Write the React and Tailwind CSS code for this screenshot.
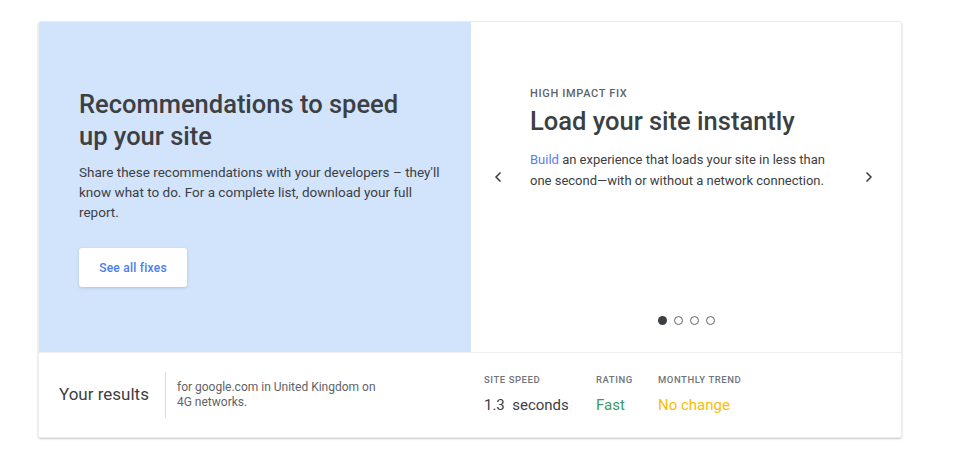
import { ChevronLeft, ChevronRight } from 'lucide-react';

const Stat = ({ label, value, color }) => (
  <div className="flex flex-col whitespace-nowrap">
    <span className="text-[9.5px] font-medium tracking-[0.06em] uppercase text-[#70757a]">{label}</span>
    <span className={`mt-[7px] text-[15px] ${color}`}>{value}</span>
  </div>
);

const App = () => {
  return (
    <div className="min-h-[457px] bg-white pt-[21px] pl-[38px]" style={{ fontFamily: 'Roboto, "Noto Sans", sans-serif' }}>
      <div className="w-[864px] rounded-[3px] border border-[#ececec] shadow-[0_1px_2px_rgba(60,64,67,0.3)] overflow-hidden">
        <div className="flex h-[330px]">
          <div className="w-[432px] bg-[#d2e3fc] pl-[40px] pr-[10px] pt-[66px]">
            <h2 className="w-[330px] text-[25.5px] font-medium leading-[32px] text-[#3c4043]">
              Recommendations to speed up your site
            </h2>
            <p className="mt-[10px] w-[372px] text-[13.5px] leading-[20px] text-[#3c4043]">
              Share these recommendations with your developers – they'll know what to do. For a complete list, download your full report.
            </p>
            <button className="mt-[26px] h-[39px] w-[108px] rounded-[3px] bg-white text-[12px] font-medium tracking-[0.02em] text-[#4a7cf2] shadow-[0_1px_3px_rgba(60,64,67,0.2)]">
              See all fixes
            </button>
          </div>
          <div className="flex flex-1">
            <div className="flex w-[54px] items-center justify-center pb-[20px]">
              <ChevronLeft size={16} strokeWidth={2.5} className="text-[#3c4043]" />
            </div>
            <div className="flex flex-1 flex-col pl-[5px] pt-[64px]">
              <div className="text-[11px] font-medium tracking-[0.06em] text-[#5f6368]">HIGH IMPACT FIX</div>
              <h3 className="mt-[2px] text-[25.5px] font-medium leading-[32px] text-[#3c4043]">Load your site instantly</h3>
              <p className="mt-[12px] w-[296px] text-[13px] leading-[21px] text-[#3c4043]">
                <span className="text-[#5a7cf0]">Build</span> an experience that loads your site in less than one second—with or without a network connection.
              </p>
              <div className="mt-auto flex justify-center gap-[7px] pb-[27px] pl-[6px]">
                <span className="h-[9px] w-[9px] rounded-full bg-[#3c4043]" />
                <span className="h-[9px] w-[9px] rounded-full border border-[#5f6368]" />
                <span className="h-[9px] w-[9px] rounded-full border border-[#5f6368]" />
                <span className="h-[9px] w-[9px] rounded-full border border-[#5f6368]" />
              </div>
            </div>
            <div className="flex w-[64px] items-center justify-center pb-[20px]">
              <ChevronRight size={16} strokeWidth={2.5} className="text-[#3c4043]" />
            </div>
          </div>
        </div>
        <div className="flex h-[85px] items-center border-t border-[#eeeeee] bg-white">
          <div className="pl-[20px] pr-[16px] text-[17px] text-[#3c4043]">Your results</div>
          <div className="h-[46px] w-px bg-[#dadce0]" />
          <div className="w-[220px] pl-[11px] text-[12px] leading-[15px] text-[#5f6368]">
            for google.com in United Kingdom on 4G networks.
          </div>
          <div className="ml-[98px] flex">
            <div className="w-[112px]"><Stat label="Site speed" value={<span>1.3&nbsp; seconds</span>} color="text-[#3c4043]" /></div>
            <div className="w-[62px]"><Stat label="Rating" value="Fast" color="text-[#3c9a5f]" /></div>
            <Stat label="Monthly trend" value="No change" color="text-[#fbbc04]" />
          </div>
        </div>
      </div>
    </div>
  );
};

export default App;
